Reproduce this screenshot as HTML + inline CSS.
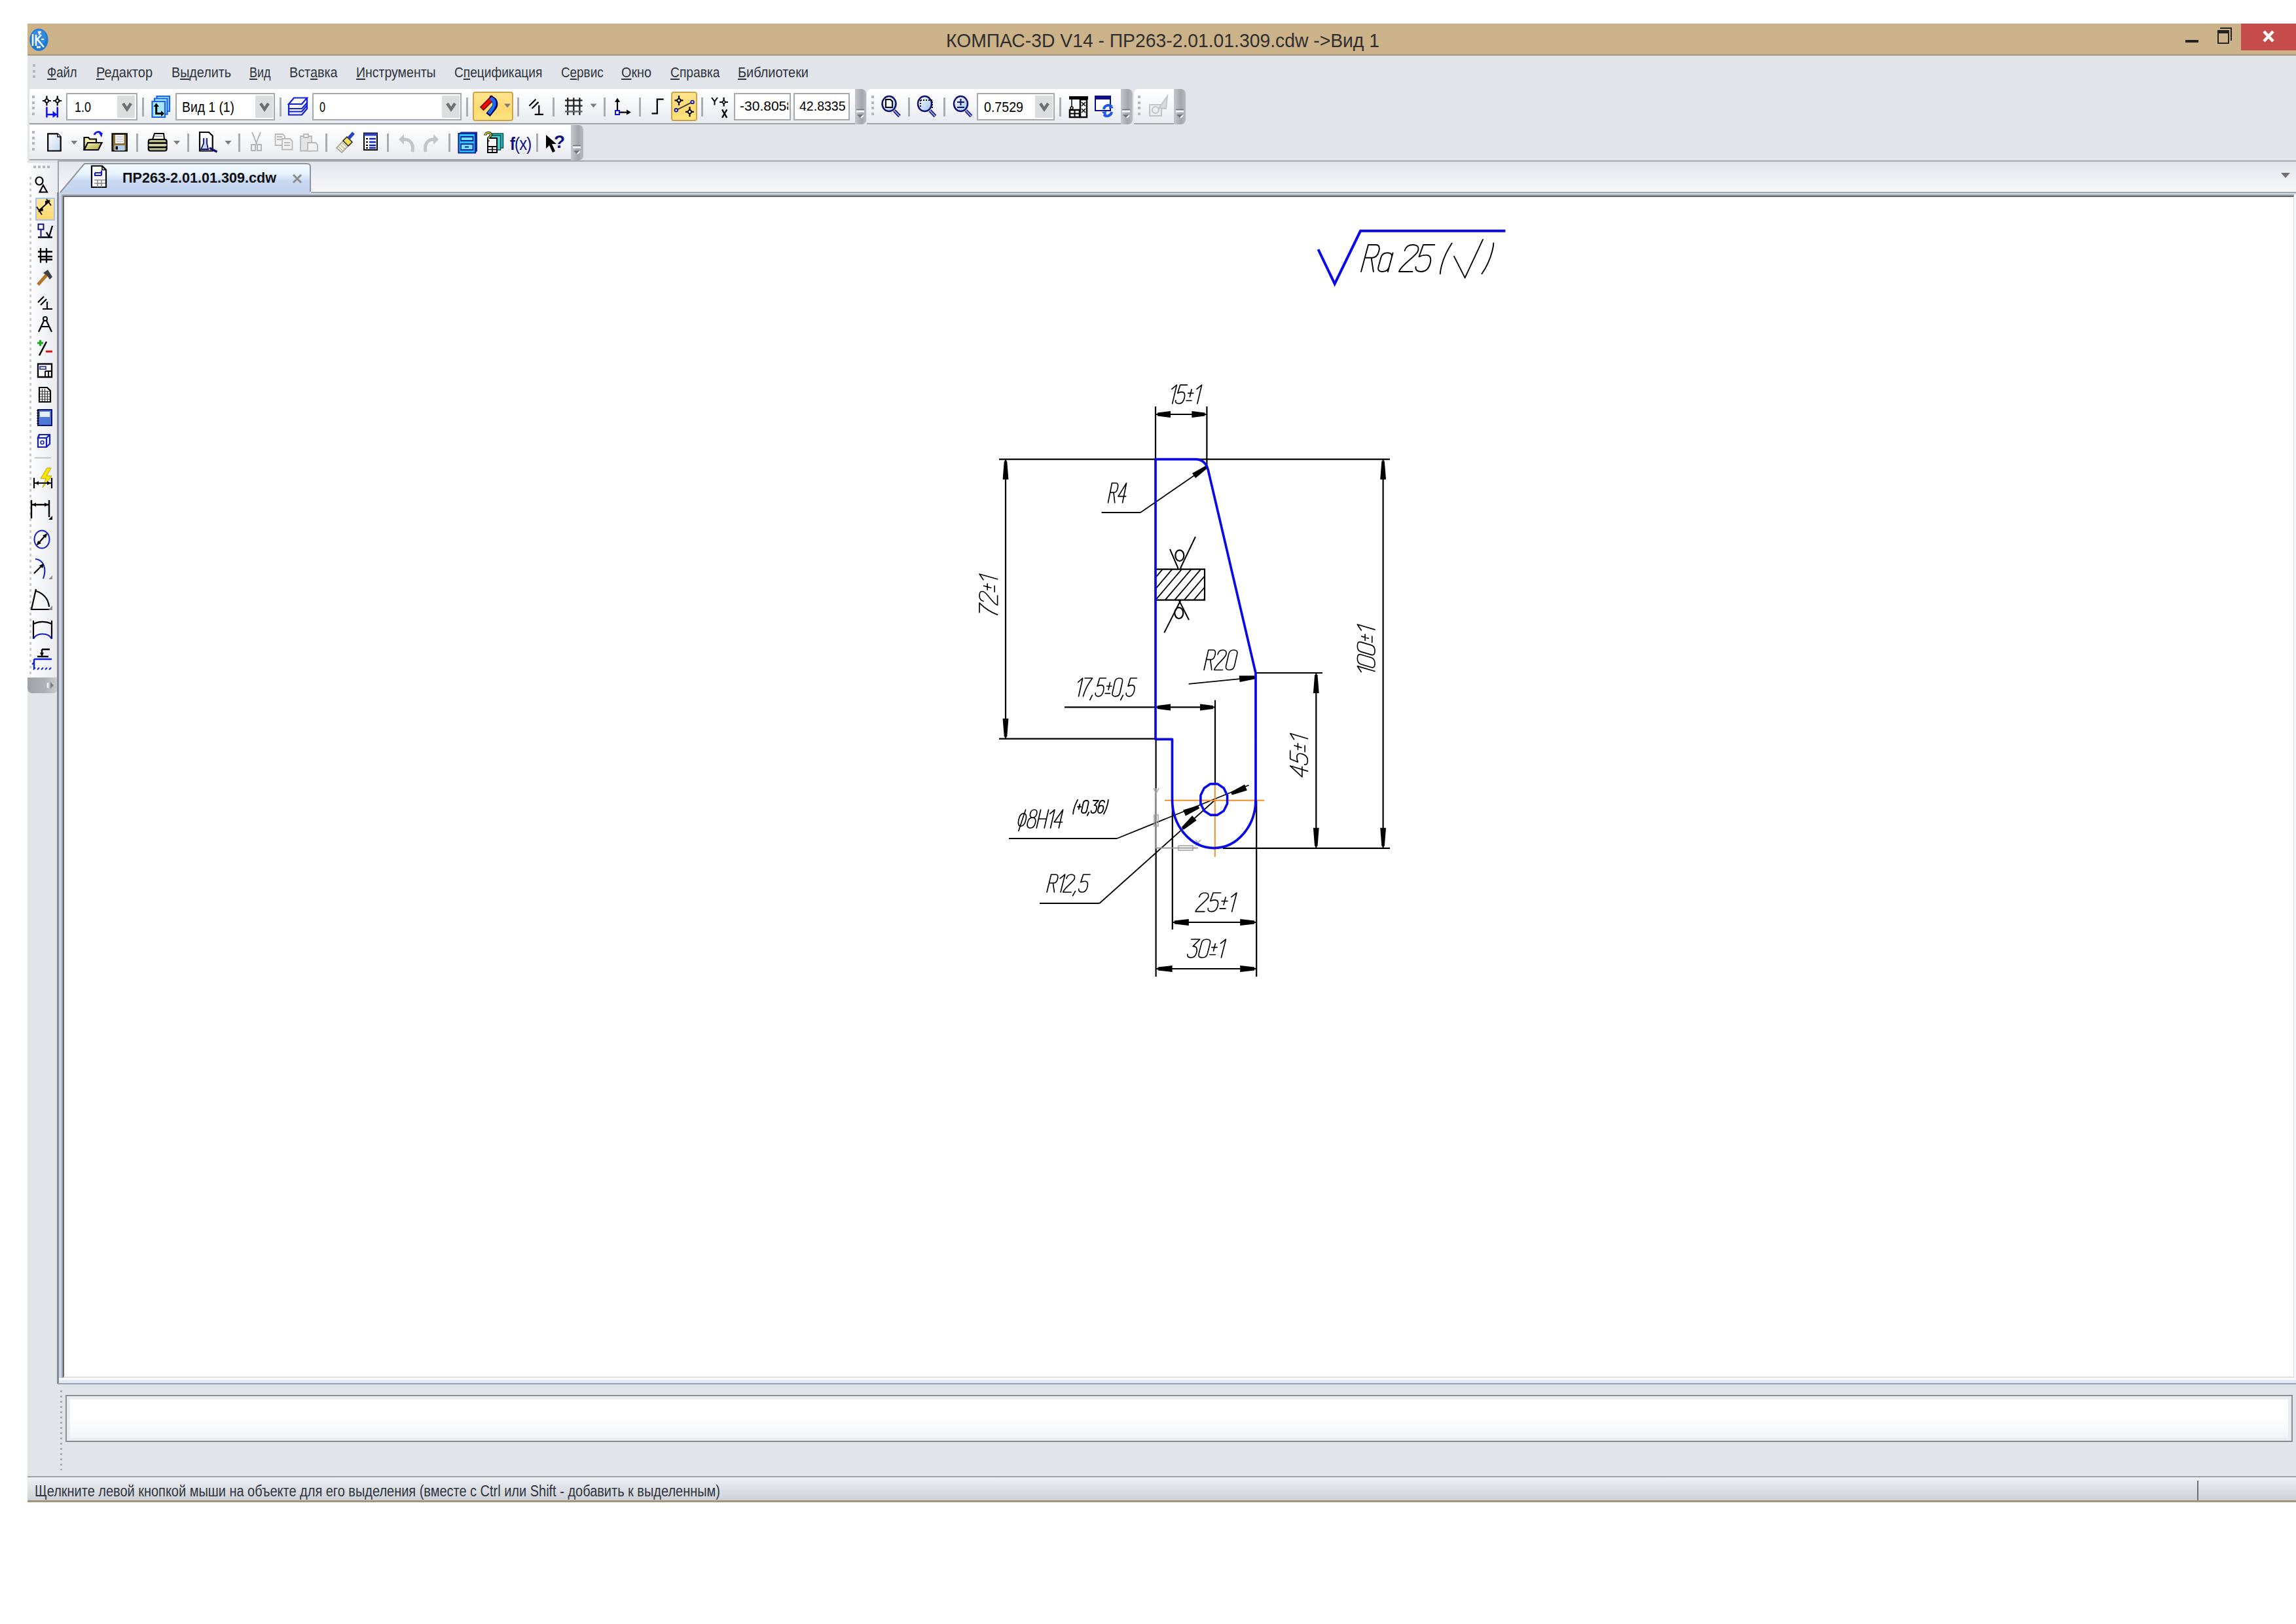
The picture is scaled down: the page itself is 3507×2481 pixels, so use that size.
<!DOCTYPE html>
<html><head><meta charset="utf-8">
<style>
html,body{margin:0;padding:0;}
body{width:3507px;height:2481px;background:#fff;position:relative;overflow:hidden;font-family:"Liberation Sans",sans-serif;}
.a{position:absolute;}
.t{position:absolute;white-space:pre;transform-origin:0 0;line-height:1;}
#title{left:42px;top:36px;width:3465px;height:49px;background:#CBB288;border-bottom:2px solid #A8967A;box-sizing:border-box;}
#menubar{left:42px;top:85px;width:3465px;height:161px;background:#E1E5EA;}
.tb{position:absolute;background:linear-gradient(#FFFFFF 0%,#F6F7F9 45%,#E7EAEE 100%);border-bottom:2px solid #A0A4A9;box-sizing:border-box;}
.cap{position:absolute;background:linear-gradient(90deg,#C4C8CD,#A2A6AC 60%,#B8BCC1);border-radius:0 7px 7px 0;box-sizing:border-box;}
.sep{position:absolute;width:3px;background:#A9ADB2;}
.gripv{position:absolute;width:4px;background:repeating-linear-gradient(#B4B8BD 0 4px,transparent 4px 8.6px);}
.griph{position:absolute;height:5px;background:repeating-linear-gradient(90deg,#B5B9BE 0 5px,transparent 5px 10px);}
.combo{position:absolute;background:#fff;border:2px solid #A6AAAF;box-sizing:border-box;}
.dd{position:absolute;background:#DCDDDF;}
.hl{position:absolute;background:linear-gradient(#FFE58E,#FFD970 60%,#FDE680);border:2px solid #CDA24A;border-radius:4px;box-sizing:border-box;}
#leftcol{left:42px;top:246px;width:47px;height:2010px;background:#E1E5EA;}
#lefttb{left:42px;top:249px;width:46px;height:787px;background:linear-gradient(90deg,#FFFFFF,#F2F3F6 60%,#E9EAF0);}
#tabbar{left:88px;top:245px;width:3419px;height:50px;background:linear-gradient(#E2E6EB,#F7F8FA);border-top:2px solid #A4A8AD;border-left:2px solid #A0A4A8;box-sizing:border-box;}
#frame{left:87px;top:294px;width:3420px;height:1820px;background:#C8D4EC;border-left:3px solid #858A94;box-sizing:border-box;}
#tabline{left:475px;top:293px;width:3032px;height:4px;background:linear-gradient(#A0A4AC 0 2px,#D8DCE6 2px 4px);}
#canvas{left:94px;top:297px;width:3410px;height:1808px;background:#A2A6AA;}
#canvas2{left:96px;top:299px;width:3408px;height:1806px;background:#fff;border-left:2px solid #64686C;border-top:2px solid #64686C;border-right:1px solid #D8DADC;border-bottom:2px solid #DEDDE2;box-sizing:border-box;}
#cmdpanel{left:88px;top:2113px;width:3419px;height:143px;background:#E1E5EA;border-top:2px solid #98A0AA;box-sizing:border-box;}
#fbot{left:90px;top:2105px;width:3417px;height:8px;background:linear-gradient(#FFFFFF 0 3.5px,#E3EAF7 3.5px);}
#fright{left:3504px;top:297px;width:3px;height:1810px;background:#F5F7FA;}
#cmdbox{left:100px;top:2131px;width:3402px;height:72px;background:#E9ECF0;border:2px solid #8A8E93;box-sizing:border-box;}
#cmdin{left:107px;top:2138px;width:3388px;height:59px;background:linear-gradient(#FFFFFF 0%,#FFFFFF 45%,#F1F3F5 100%);}
#status{left:42px;top:2255px;width:3465px;height:40px;background:linear-gradient(#EEF0F4,#E3E6EB 30%,#CDD0D5 100%);border-top:2px solid #9EA2A7;border-bottom:3px solid #A39678;box-sizing:border-box;}

</style></head><body>
<div id="title" class="a"></div>
<div id="menubar" class="a"></div>
<div class="gripv" style="left:50px;top:98px;height:22px;"></div>
<!-- toolbar 1 -->
<div class="tb" style="left:45px;top:136px;width:1264px;height:54px;"></div>
<div class="cap" style="left:1306px;top:136px;width:17px;height:54px;"></div>
<div class="gripv" style="left:49px;top:146.3px;height:30px;"></div>
<!-- toolbar 2 -->
<div class="tb" style="left:45px;top:191px;width:830px;height:54px;"></div>
<div class="cap" style="left:872px;top:191px;width:19px;height:54px;"></div>
<div class="gripv" style="left:49px;top:200.3px;height:30px;"></div>
<!-- toolbar 3 -->
<div class="tb" style="left:1324px;top:136px;width:392px;height:54px;border-radius:6px 0 0 0;"></div>
<div class="cap" style="left:1712px;top:136px;width:18px;height:54px;"></div>
<div class="gripv" style="left:1331px;top:146.3px;height:30px;"></div>
<!-- toolbar 4 -->
<div class="tb" style="left:1732px;top:136px;width:65px;height:54px;border-radius:6px 0 0 0;"></div>
<div class="cap" style="left:1793px;top:136px;width:18px;height:54px;"></div>
<div class="gripv" style="left:1738px;top:146.3px;height:30px;"></div>
<div id="leftcol" class="a"></div>
<div id="lefttb" class="a"></div>
<div class="a" style="left:45px;top:270px;width:3px;height:760px;background:repeating-linear-gradient(#C6C9CE 0 4px,transparent 4px 9px);"></div>
<div class="a" style="left:51px;top:253px;width:26px;height:4px;background:repeating-linear-gradient(90deg,#B5B9BE 0 4px,transparent 4px 7px);"></div>
<div class="cap" style="left:42px;top:1035px;width:46px;height:24px;border-radius:0 0 7px 7px;background:linear-gradient(90deg,#9FA3A9,#AEB2B7 60%,#C9CCD0);"></div>
<div id="tabbar" class="a"></div>
<div id="frame" class="a"></div>
<div id="canvas" class="a"></div>
<div id="canvas2" class="a"></div>
<div id="tabline" class="a"></div>
<div id="fbot" class="a"></div>
<div id="fright" class="a"></div>
<div id="cmdpanel" class="a"></div>
<div class="a" style="left:92px;top:2124px;width:3px;height:122px;background:repeating-linear-gradient(#A9ADB2 0 3px,transparent 3px 8px);"></div>
<div id="cmdbox" class="a"></div>
<div id="cmdin" class="a"></div>
<div id="status" class="a"></div>
<div class="a" style="left:3356px;top:2262px;width:2px;height:30px;background:#6C7075;"></div>

<!-- combos & fields -->
<div class="combo" style="left:101px;top:142px;width:109px;height:42px;"></div>
<div class="dd" style="left:179px;top:146px;width:27px;height:34px;"></div>
<div class="combo" style="left:268px;top:142px;width:152px;height:42px;"></div>
<div class="dd" style="left:390px;top:146px;width:27px;height:34px;"></div>
<div class="combo" style="left:477px;top:142px;width:228px;height:42px;"></div>
<div class="dd" style="left:675px;top:146px;width:27px;height:34px;"></div>
<div class="combo" style="left:1121px;top:142px;width:87px;height:42px;overflow:hidden;"></div>
<div class="combo" style="left:1212px;top:142px;width:86px;height:42px;"></div>
<div class="combo" style="left:1492px;top:142px;width:119px;height:42px;"></div>
<div class="dd" style="left:1581px;top:146px;width:27px;height:34px;"></div>
<!-- separators toolbar1 -->
<div class="sep" style="left:217px;top:149px;height:29px;"></div>
<div class="sep" style="left:427px;top:149px;height:29px;"></div>
<div class="sep" style="left:712px;top:149px;height:29px;"></div>
<div class="sep" style="left:790px;top:149px;height:29px;"></div>
<div class="sep" style="left:844px;top:149px;height:29px;"></div>
<div class="sep" style="left:922px;top:149px;height:29px;"></div>
<div class="sep" style="left:976px;top:149px;height:29px;"></div>
<div class="sep" style="left:1071px;top:149px;height:29px;"></div>
<div class="sep" style="left:1387px;top:149px;height:29px;"></div>
<div class="sep" style="left:1441px;top:149px;height:29px;"></div>
<div class="sep" style="left:1618px;top:149px;height:29px;"></div>
<!-- separators toolbar2 -->
<div class="sep" style="left:208px;top:204px;height:28px;"></div>
<div class="sep" style="left:286px;top:204px;height:28px;"></div>
<div class="sep" style="left:364px;top:204px;height:28px;"></div>
<div class="sep" style="left:497px;top:204px;height:28px;"></div>
<div class="sep" style="left:591px;top:204px;height:28px;"></div>
<div class="sep" style="left:685px;top:204px;height:28px;"></div>
<div class="sep" style="left:819px;top:204px;height:28px;"></div>
<!-- highlighted buttons -->
<div class="hl" style="left:722px;top:140px;width:62px;height:45px;"></div>
<div class="hl" style="left:1025px;top:140px;width:40px;height:45px;"></div>
<div class="a" style="left:54px;top:302px;width:30px;height:35px;background:linear-gradient(#FFE9A0,#FFD86A);border:2px solid #A9C3E8;box-sizing:border-box;"></div>
<!-- title bar window buttons -->
<div class="a" style="left:3423px;top:36px;width:84px;height:41px;background:#C74D4D;"></div>
<div class="a" style="left:3338px;top:61px;width:20px;height:4px;background:#222;"></div>
<div class="a" style="left:3391px;top:42px;width:18px;height:20px;border-top:2.5px solid #222;border-right:2.5px solid #222;box-sizing:border-box;"></div>
<div class="a" style="left:3387px;top:46px;width:18px;height:21px;border:2.5px solid #222;border-top-width:5.5px;box-sizing:border-box;background:#CBB288;"></div>
<svg class="a" style="left:3450px;top:44px" width="30" height="24"><path d="M8,4 L22,19 M22,4 L8,19" stroke="#fff" stroke-width="4.5"/></svg>
<svg class="a" style="left:3480px;top:260px" width="24" height="16"><path d="M4,4 H18 L11,12 Z" fill="#707070"/></svg>
<!-- tab -->
<svg class="a" style="left:0;top:0" width="600" height="310">
<path d="M92,294 L129,250 L469,250 Q474,250 474,255 L474,294 Z" fill="url(#tabg)" stroke="none"/>
<path d="M92,294 L129,250 L469,250 Q474,250 474,255 L474,293" fill="none" stroke="#8E949B" stroke-width="2"/>
<defs><linearGradient id="tabg" x1="0" y1="0" x2="0" y2="1"><stop offset="0" stop-color="#F4FAFF"/><stop offset="0.35" stop-color="#E8F3FD"/><stop offset="0.6" stop-color="#C9D9F2"/><stop offset="1" stop-color="#C3D3EF"/></linearGradient></defs>
<path d="M448,267 L460,279 M460,267 L448,279" stroke="#8C8C8C" stroke-width="3"/>
</svg>
<svg class="a" style="left:0;top:0" width="3507" height="1100">
<defs>
<linearGradient id="docg" x1="0" y1="0" x2="1" y2="1"><stop offset="0" stop-color="#FFFFFF"/><stop offset="1" stop-color="#BFD7F0"/></linearGradient>
<linearGradient id="foldg" x1="0" y1="0" x2="1" y2="1"><stop offset="0" stop-color="#FAF6B0"/><stop offset="1" stop-color="#A8A040"/></linearGradient>
<linearGradient id="magg" x1="0" y1="0" x2="1" y2="1"><stop offset="0" stop-color="#FFFFFF"/><stop offset="1" stop-color="#9CC0F0"/></linearGradient>
<g id="chev"><path d="M-6,-5 L0,4 L6,-5" fill="none" stroke="#6F6F6F" stroke-width="4.5" stroke-linejoin="miter"/></g>
<g id="tri"><path d="M-5,-3 H5 L0,3 Z" fill="#7C7C7C"/></g>
<g id="xh"><path d="M-6.5,0 H6.5 M0,-7.5 V7.5" stroke="#000" stroke-width="2.2"/><circle cx="0" cy="0" r="2.6" fill="#fff" stroke="#000" stroke-width="1.8"/></g>
<g id="capsym"><path d="M-6,0 H6" stroke="#F4F5F6" stroke-width="3"/><path d="M-6,-2.5 H6" stroke="#70747A" stroke-width="1.5"/><path d="M-5,5 H5 L0,10 Z" fill="#70747A"/><path d="M1,10 L5,6" stroke="#F4F5F6" stroke-width="2"/></g>
</defs>
<!-- combo chevrons -->
<use href="#chev" x="194" y="163"/>
<use href="#chev" x="404" y="163"/>
<use href="#chev" x="689" y="163"/>
<use href="#chev" x="1595" y="163"/>
<!-- cap symbols -->
<use href="#capsym" x="1314" y="170"/>
<use href="#capsym" x="881" y="225"/>
<use href="#capsym" x="1720" y="170"/>
<use href="#capsym" x="1802" y="170"/>
<!-- T1: snap icon -->
<use href="#xh" x="71.4" y="154"/>
<use href="#xh" x="87.7" y="154"/>
<path d="M71.4,163.5 V179.6 M87.7,163.5 V179.6 M71.4,175 H82" stroke="#1010E8" stroke-width="2.5" fill="none"/>
<path d="M80.5,169.5 L87.5,175 L80.5,180 Z" fill="#1010E8"/>
<!-- T1: views icon -->
<rect x="239.5" y="147" width="19.5" height="23" fill="#A6E6FA" stroke="#1A63E6" stroke-width="2.2"/>
<rect x="236" y="150.5" width="19.5" height="24" fill="#A6E6FA" stroke="#1A63E6" stroke-width="2.2"/>
<rect x="232.5" y="155" width="19.5" height="24" fill="#A6E6FA" stroke="#1A63E6" stroke-width="2.2"/>
<path d="M238.7,162 V173.4 H247" stroke="#000" stroke-width="3" fill="none"/>
<path d="M234.5,163 L238.7,157.5 L243,163 Z M246,169 L251,173.4 L246,178 Z" fill="#000"/>
<!-- T1: layers icon -->
<g fill="none" stroke="#1020D8" stroke-width="2.2">
<path d="M449,149.5 H469 L461,159 H441 Z"/>
<path d="M441,166 H461 L469,157"/>
<path d="M441,159 V175.5 H461 L469,166 V149.5"/>
<path d="M441,170.5 H461 L469,161"/>
</g>
<!-- T1: magnet -->
<path d="M738.5,163.5 L751,151" stroke="#700000" stroke-width="8" stroke-linecap="square"/>
<path d="M751,151 C757,153 758,160 754,165 L748,172.5" fill="none" stroke="#000060" stroke-width="8" stroke-linecap="square"/>
<path d="M738.5,163.5 L751,151" stroke="#F00808" stroke-width="5" stroke-linecap="square"/>
<path d="M751.5,151.5 C756,154 756.5,159.5 753,164.5 L748,171.5" fill="none" stroke="#1A6CF0" stroke-width="5" stroke-linecap="square"/>
<use href="#tri" x="775" y="161.5"/>
<!-- T1: parallel/perp -->
<path d="M808.4,161.7 L818.4,151.7 M812.6,165.8 L822.5,155.9 M823.3,160.8 V174.9 M816.7,174.9 H830" stroke="#000" stroke-width="2.2" fill="none"/>
<!-- T1: grid -->
<path d="M867.2,149.2 V175.7 M876.3,149.2 V175.7 M885.4,149.2 V175.7 M863,153.4 H889.6 M863,161.7 H889.6" stroke="#222" stroke-width="2.3"/>
<path d="M863,170.3 H889.6" stroke="#666" stroke-width="2.5"/>
<use href="#tri" x="906.5" y="161.5"/>
<!-- T1: axis -->
<path d="M943,152 V171.6 H961" stroke="#000" stroke-width="2.2" fill="none"/>
<path d="M939,156 L943,149.5 L947,156 Z M957,167.5 L964,171.6 L957,175.5 Z" fill="#000"/>
<rect x="940" y="169" width="6" height="6" fill="#fff" stroke="#1010E8" stroke-width="2"/>
<!-- T1: step -->
<path d="M995.5,173.3 H1003.8 V151.7 H1013.7" stroke="#000" stroke-width="2.3" fill="none"/>
<!-- T1: snap points -->
<path d="M1033,168.3 L1057.6,155.9" stroke="#333" stroke-width="1.8"/>
<use href="#xh" x="1037" y="153.4"/>
<use href="#xh" x="1053.5" y="170.8"/>
<circle cx="1032.8" cy="168.3" r="2.3" fill="#fff" stroke="#1515C0" stroke-width="1.8"/>
<circle cx="1057.6" cy="155.9" r="2.3" fill="#fff" stroke="#1515C0" stroke-width="1.8"/>
<!-- T1: Y X -->
<path d="M1087,149 L1091.5,155 L1096,149 M1091.5,155 V160.6" stroke="#000" stroke-width="2" fill="none"/>
<path d="M1099,156 H1112 M1105.6,149 V162.6" stroke="#000" stroke-width="2.2"/>
<circle cx="1105.6" cy="156" r="2" fill="#fff" stroke="#000" stroke-width="1.5"/>
<path d="M1103,167.4 L1110.3,179.9 M1110.3,167.4 L1103,179.9" stroke="#000" stroke-width="2.3"/>
<!-- T3: magnifiers -->
<g id="mag1">
<path d="M1366,169 L1374,177.5" stroke="#101070" stroke-width="5"/>
<path d="M1366,169 L1374,177.5" stroke="#8A9CD8" stroke-width="2"/>
<ellipse cx="1358" cy="158.6" rx="10.5" ry="11.5" fill="url(#magg)" stroke="#101070" stroke-width="2.5"/>
</g>
<path d="M1353,152 H1360 L1363,155 V164 H1353 Z" fill="#fff" stroke="#000" stroke-width="2"/>
<use href="#mag1" x="54.5" y="0"/>
<path d="M1406,153 H1424 V165 M1406,153 V165" stroke="#000" stroke-width="1.8" stroke-dasharray="2,2" fill="none"/>
<use href="#mag1" x="109.5" y="0"/>
<path d="M1462,156 H1473 M1467.5,151 V161 M1462,164 H1473" stroke="#101070" stroke-width="2"/>
<!-- T3: crane -->
<path d="M1633,147 H1662 V152 H1633 Z" fill="#000"/>
<path d="M1650,152 H1660 V179 H1650 Z" fill="#fff" stroke="#000" stroke-width="2.5"/>
<path d="M1652,156 L1658,162 M1658,156 L1652,162 M1652,166 L1658,172 M1658,166 L1652,172" stroke="#000" stroke-width="1.5"/>
<path d="M1637,152 V163" stroke="#000" stroke-width="1.5"/>
<circle cx="1637" cy="165" r="2" fill="none" stroke="#000" stroke-width="1.5"/>
<rect x="1634" y="168" width="15" height="11" fill="#fff" stroke="#000" stroke-width="2.5"/>
<path d="M1634,173.5 H1649 M1641.5,168 V179" stroke="#000" stroke-width="2"/>
<!-- T3: refresh window -->
<rect x="1673" y="147" width="23" height="22" fill="#fff" stroke="#101080" stroke-width="2"/>
<rect x="1673" y="147" width="23" height="5" fill="#101080"/>
<path d="M1686,167 A7,7 0 0 1 1698,163" fill="none" stroke="#1E5AE8" stroke-width="4"/>
<path d="M1698,171 A7,7 0 0 1 1686,175" fill="none" stroke="#1E5AE8" stroke-width="4"/>
<path d="M1695,158 L1701,165 L1694,166 Z M1689,178 L1683,171 L1690,170 Z" fill="#1E5AE8"/>
<!-- T4: disabled -->
<g opacity="0.45" stroke="#8A8A8A" fill="none" stroke-width="2">
<rect x="1756" y="160" width="18" height="17" fill="#E6E6E6"/>
<ellipse cx="1765" cy="168" rx="5" ry="5"/>
<path d="M1770,165 L1783,147 L1781,166 Z" fill="#BBBBBB"/>
</g>
<!-- T2: new doc -->
<path d="M73.2,204.3 H88 L92.7,209 V230.5 H73.2 Z" fill="url(#docg)" stroke="#000" stroke-width="2.2"/>
<path d="M88,204.3 V209 H92.7" fill="#fff" stroke="#000" stroke-width="1.5"/>
<use href="#tri" x="113.3" y="218"/>
<!-- T2: open -->
<path d="M128.5,229 V210 H135 L137,212.5 H147 V218" fill="#F7F0A8" stroke="#000" stroke-width="2.2"/>
<path d="M128.5,229 L134,218 H155.5 L150,229 Z" fill="url(#foldg)" stroke="#000" stroke-width="2.2"/>
<path d="M144,206 C146,201 152,200 154,204" fill="none" stroke="#1818E8" stroke-width="3"/>
<path d="M151,203 L157,203 L155,210 Z" fill="#1818E8"/>
<!-- T2: save -->
<rect x="171.5" y="204.3" width="22.3" height="26.2" fill="#8A7240" stroke="#000" stroke-width="2.2"/>
<rect x="176" y="206" width="13.5" height="13" fill="#F4F2EE"/>
<path d="M177.5,209 H188 M177.5,212.5 H188 M177.5,216 H188" stroke="#B8B4C8" stroke-width="1.2"/>
<rect x="175" y="222" width="15.5" height="8" fill="#B0CFEA"/>
<rect x="176.5" y="223.5" width="3.5" height="5" fill="#000"/>
<!-- T2: printer -->
<path d="M233,213 L236,204 H250 L251,213" fill="#F4F4F0" stroke="#000" stroke-width="2"/>
<path d="M236.5,208 H248" stroke="#999" stroke-width="1.5"/>
<rect x="226.8" y="213" width="27.8" height="17.5" rx="3" fill="#BEBE90" stroke="#000" stroke-width="2.2"/>
<path d="M227,218.5 H254.5 M227,225 H254.5" stroke="#000" stroke-width="2.5"/>
<path d="M227,221.5 H254.5" stroke="#E0E0C0" stroke-width="2"/>
<use href="#tri" x="270" y="218"/>
<!-- T2: preview -->
<path d="M305,202 H319 L324.7,207.5 V230.5 H305 Z" fill="#fff" stroke="#000" stroke-width="2.2"/>
<path d="M311,211 V219 L307,228 H318 L316,219 V211" fill="#C8D8F2" stroke="#101070" stroke-width="1.8"/>
<path d="M320,226 L331.5,232" stroke="#101070" stroke-width="3.5"/>
<use href="#tri" x="348.5" y="218"/>
<!-- T2: scissors (disabled) -->
<g stroke="#B4B4B4" stroke-width="2" fill="none">
<path d="M385,202 L393,222 M398,202 L390,222"/>
<rect x="384" y="221" width="6" height="9"/><rect x="393" y="221" width="6" height="9"/>
</g>
<!-- T2: copy/paste disabled -->
<g stroke="#B8B8B8" stroke-width="1.8" fill="#F2F2F2">
<path d="M420.5,205 H432 L435,208 V222 H420.5 Z"/>
<path d="M431,212 H443 L446.5,215.5 V228.5 H431 Z"/>
<path d="M423,209 H431 M423,213 H431 M434,218 H443 M434,222 H443" fill="none"/>
<path d="M459,208 H476 V230.5 H459 Z" fill="#E4E4E4"/>
<path d="M464,205 H471 V210 H464 Z"/>
<path d="M470,218 H482 L485,221 V230.6 H470 Z"/>
</g>
<!-- T2: brush -->
<path d="M514,226 L526,213 L534,221 L522,233 Z" fill="#F4F0D0" stroke="#9A9A9A" stroke-width="1.5"/>
<path d="M516,223 L524,231 M519,220 L527,228 M522,217 L530,225" stroke="#A0A0A0" stroke-width="1"/>
<path d="M524,215 L530,209 L538,217 L532,223 Z" fill="#F0E050" stroke="#202020" stroke-width="1.5"/>
<path d="M532,212 L540,203" stroke="#2840C0" stroke-width="5"/>
<!-- T2: list -->
<rect x="556" y="203.5" width="20" height="25.5" fill="#fff" stroke="#000" stroke-width="2"/>
<rect x="556" y="203.5" width="20" height="4" fill="#3040C0"/>
<path d="M559,212 H562 M559,217 H562 M559,222 H562 M559,226 H562" stroke="#000" stroke-width="2"/>
<path d="M564,212 H574 M564,217 H574 M564,222 H574 M564,226 H574" stroke="#1020D0" stroke-width="2.5"/>
<!-- T2: undo/redo disabled -->
<path d="M630,232 C632,222 628,213 618,213 L612,213" fill="none" stroke="#C4C4C4" stroke-width="5"/>
<path d="M609,213 L617,205 L617,221 Z" fill="#C4C4C4"/>
<path d="M650,232 C648,222 652,213 662,213 L666,213" fill="none" stroke="#C4C4C4" stroke-width="5"/>
<path d="M670,213 L662,205 L662,221 Z" fill="#C4C4C4"/>
<!-- T2: cabinet -->
<path d="M701,204 L704,201.5 H729 V231 L726,233.5 Z" fill="#1030A0"/>
<rect x="700.5" y="204" width="25.5" height="29.5" fill="#20C8F0" stroke="#1020A0" stroke-width="2.2"/>
<rect x="704" y="209" width="18.5" height="6" fill="#70E4F8" stroke="#1020A0" stroke-width="1.8"/>
<rect x="704" y="220" width="18.5" height="9" fill="#70E4F8" stroke="#1020A0" stroke-width="1.8"/>
<path d="M710,224.5 H716" stroke="#1020A0" stroke-width="2"/>
<!-- T2: help window -->
<rect x="752" y="204" width="16.5" height="22" fill="#28B8B8" stroke="#105050" stroke-width="1.5"/>
<rect x="748" y="207" width="16.5" height="22" fill="#50D0D0" stroke="#105050" stroke-width="1.5"/>
<rect x="745" y="211" width="14" height="13" fill="#fff" stroke="#000" stroke-width="2"/>
<rect x="745" y="224" width="14" height="9" fill="#fff" stroke="#000" stroke-width="2"/>
<path d="M745,228.5 H759 M752,224 V233" stroke="#000" stroke-width="1.5"/>
<path d="M741,207 C741,202 750,201 750,206 C750,209 746,209 746,212 M746,214.5 V216" fill="none" stroke="#000" stroke-width="3.5"/>
<path d="M741,207 C741,202 750,201 750,206 C750,209 746,209 746,212" fill="none" stroke="#F0F020" stroke-width="1.5"/>
<!-- T2: f(x) -->
<text x="779" y="229" font-family="Liberation Sans" font-weight="bold" font-size="28" fill="#10107A" transform="translate(779,0) scale(0.85,1) translate(-779,0)" letter-spacing="-1">f<tspan font-weight="normal">(x)</tspan></text>
<!-- T2: arrow ? -->
<path d="M834,206 L834,227 L839,222 L844,233 L848,231 L843,220 L850,220 Z" fill="#000"/>
<text x="846" y="226" font-family="Liberation Sans" font-weight="bold" font-size="28" fill="#10107A">?</text>
<!-- left toolbar icons -->
<g stroke="#000" stroke-width="2.2" fill="none">
<ellipse cx="60" cy="276.5" rx="5.5" ry="6"/>
<path d="M66,283 L72,293.5 H60.5 Z"/>
</g>
<g stroke="#000" stroke-width="1.8" fill="none">
<path d="M59,322 L76,307 M56,316 L64,328 M71,304 L78,314"/>
</g>
<path d="M58,324 L65,316 L66,322 Z M77,305 L69,313 L69,307 Z" fill="#000"/>
<rect x="58.5" y="342.5" width="8" height="8" fill="#fff" stroke="#10107A" stroke-width="2"/>
<path d="M62.5,350.5 V361 M58,362.5 H80 M71,355 L75,361.5 L80,345" stroke="#10107A" stroke-width="2" fill="none"/>
<path d="M58,362.5 H80 M71,355 L75,361.5 L80,345" stroke="#000" stroke-width="2" fill="none"/>
<path d="M62,379 V401.5 M71,379 V401.5 M58,384.5 H80 M58,392 H80 M62.5,396.5 H80" stroke="#000" stroke-width="2.3"/>
<path d="M58,435 L73,418" stroke="#B07828" stroke-width="5"/>
<path d="M66,417 L73,412 L80,423 L76,427 L72,421 Z" fill="#404040"/>
<path d="M58,462 L67,453 M62,466 L71,457 M72,461 V472 M65,472 H80" stroke="#000" stroke-width="2.2" fill="none"/>
<path d="M59,507 L67.5,489 M70.5,489 L79,507 M62,499 H76" stroke="#000" stroke-width="2.2" fill="none"/><circle cx="69" cy="487" r="3" fill="#fff" stroke="#000" stroke-width="2"/>
<path d="M57,524 H66 M61.5,519.5 V528.5" stroke="#10B010" stroke-width="3"/>
<path d="M60,543 L71,522" stroke="#000" stroke-width="2.5"/>
<path d="M70,537 H80" stroke="#E01010" stroke-width="3"/>
<rect x="58" y="556" width="21" height="20" fill="#fff" stroke="#000" stroke-width="2.3"/>
<rect x="61" y="560" width="9" height="4" fill="#fff" stroke="#1020B0" stroke-width="1.5"/>
<path d="M69,567 H79 M69,567 V576 M74,567 V576" stroke="#000" stroke-width="1.8"/>
<path d="M60,592 H72 L77,597 V614 H60 Z" fill="#fff" stroke="#000" stroke-width="2.2"/>
<path d="M61,598 H76 M61,602 H76 M61,606 H76 M61,610 H76 M64.5,594 V613 M68.5,594 V613 M72.5,597 V613" stroke="#333" stroke-width="1.2"/>
<rect x="58" y="626" width="21" height="24" fill="#5078D8" stroke="#101070" stroke-width="2"/>
<rect x="61" y="629" width="15" height="8" fill="#E8F0FF"/>
<path d="M58,626 V650" stroke="#000" stroke-width="3" stroke-dasharray="2,2"/>
<path d="M60,664 H76 V678 L71,683 H58 V669 Z" fill="none" stroke="#1020C0" stroke-width="2.2"/>
<path d="M60,664 L58,669 H71 V683 M71,669 L76,664" stroke="#1020C0" stroke-width="2.2" fill="none"/>
<circle cx="64.5" cy="676" r="2.5" fill="none" stroke="#1020C0" stroke-width="1.5"/>
<path d="M53,699.5 H78" stroke="#B0B4B8" stroke-width="1.5"/>
<!-- dims -->
<path d="M72,715 L62,731 H70 L65,745 L79,727 H71 L78,715 Z" fill="#F8E800" stroke="#C0A000" stroke-width="1"/>
<path d="M52,730 V746 M79,730 V746 M53,738 H78" stroke="#000" stroke-width="2.2"/>
<path d="M53,738 L59,735 V741 Z M78,738 L72,735 V741 Z" fill="#000"/>
<path d="M48,764 V792 M75,764 V790 M49,771 H74" stroke="#000" stroke-width="2.4"/>
<path d="M49,771 L55,768 V774 Z M74,771 L68,768 V774 Z M80,788 L74,794 H80 Z" fill="#000"/>
<ellipse cx="64" cy="824" rx="11.5" ry="13.5" fill="none" stroke="#1020C0" stroke-width="2"/>
<path d="M57,832 L71,816" stroke="#000" stroke-width="2.3"/>
<path d="M56,833 L58,826 L63,830 Z M72,815 L70,822 L65,818 Z" fill="#000"/>
<path d="M54,854 C66,855 72,868 66,884" fill="none" stroke="#1020C0" stroke-width="2"/>
<path d="M52,876 L66,862" stroke="#000" stroke-width="2"/>
<path d="M67,861 L65,868 L60,864 Z M80,879 L74,885 H80 Z" fill="#8A8A8A"/>
<path d="M67,861 L65,868 L60,864 Z" fill="#000"/>
<path d="M55,900 L48,931 H79 M55,903 C66,906 74,915 75,927" fill="none" stroke="#000" stroke-width="2.2"/>
<path d="M80,925 L74,932 H80 Z" fill="#8A8A8A"/>
<path d="M51,948 V976 M79,948 V976 M51,953 C60,949 70,949 79,953" fill="none" stroke="#000" stroke-width="2.2"/>
<path d="M51,976 C56,966 74,966 79,976" fill="none" stroke="#1020C0" stroke-width="2"/>
<path d="M64,992 V1003 M57,1003 H74 M64,992 H76" stroke="#000" stroke-width="2.4" fill="none"/>
<path d="M61,997 H67 L64,1003 Z" fill="#000"/>
<path d="M52,1007 H79 M52,1007 V1021" stroke="#1020E0" stroke-width="2.5"/>
<path d="M52,1012 L49,1015 M54,1020 L51,1023 M60,1020 L57,1023 M66,1020 L63,1023 M72,1020 L69,1023 M78,1020 L75,1023" stroke="#1020E0" stroke-width="2"/>
<!-- left cap symbol -->
<path d="M73,1043 V1051" stroke="#F2F3F4" stroke-width="2.5"/>
<path d="M77,1042 L82,1047 L77,1052 Z" fill="#7A7E83"/>
<!-- tab icon -->
<path d="M140,253.5 H156 L162,259.5 V286 H140 Z" fill="#fff" stroke="#000" stroke-width="2.2"/>
<path d="M156,253.5 V259.5 H162" fill="none" stroke="#000" stroke-width="1.5"/>
<path d="M145,264 H155 M155,260.5 V268 M145,264 V268 H155" stroke="#1818D0" stroke-width="2.2" fill="none"/>
<path d="M144,275 H161 M144,280 H161 M149,275 V286 M155,275 V286" stroke="#8A8A8A" stroke-width="1.5"/>
<!-- title logo -->
<ellipse cx="59.4" cy="60.7" rx="14.2" ry="17" fill="#1F78D0"/>
<ellipse cx="59.4" cy="57" rx="11" ry="12" fill="#3A9AF0" opacity="0.6"/>
<path d="M50,52 V70 M55,53 V70 M55,62 L63,53 M57,60 L67,72 M58,49 H63 M60,49 V53" stroke="#fff" stroke-width="2.5" fill="none"/>
<path d="M63,60 L67,60" stroke="#fff" stroke-width="2"/>
<path d="M56,72 H62" stroke="#fff" stroke-width="3"/>
</svg>

<svg class="a" style="left:0;top:0" width="3507" height="2481">
<style>path,line,polyline,ellipse,rect{vector-effect:non-scaling-stroke}</style>
<polyline points="2013.5,381 2038.7,433.6 2078,352.8 2299.4,352.8" fill="none" stroke="#0A0AE6" stroke-width="4"/>
<line x1="1526" y1="701.6" x2="2123" y2="701.6" stroke="#000" stroke-width="2.2"/>
<line x1="1765" y1="621" x2="1765" y2="701.6" stroke="#000" stroke-width="2.2"/>
<line x1="1843.4" y1="621" x2="1843.4" y2="712" stroke="#000" stroke-width="2.2"/>
<line x1="1765" y1="633" x2="1843.4" y2="633" stroke="#000" stroke-width="2.2"/>
<path d="M1768.0,630.5 L1788.0,628.0 L1788.0,638.0 L1768.0,635.5 Z" fill="#000"/>
<path d="M1840.4,635.5 L1820.4,638.0 L1820.4,628.0 L1840.4,630.5 Z" fill="#000"/>
<line x1="1536" y1="701.6" x2="1536" y2="1128.8" stroke="#000" stroke-width="2.2"/>
<path d="M1538.2,704.6 L1540.4,732.6 L1531.6,732.6 L1533.8,704.6 Z" fill="#000"/>
<path d="M1533.8,1125.8 L1531.6,1097.8 L1540.4,1097.8 L1538.2,1125.8 Z" fill="#000"/>
<line x1="1526" y1="1128.6" x2="1765" y2="1128.6" stroke="#000" stroke-width="2.2"/>
<line x1="2112.6" y1="701.6" x2="2112.6" y2="1295.8" stroke="#000" stroke-width="2.2"/>
<path d="M2114.8,704.6 L2117.0,732.6 L2108.2,732.6 L2110.4,704.6 Z" fill="#000"/>
<path d="M2110.4,1292.8 L2108.2,1264.8 L2117.0,1264.8 L2114.8,1292.8 Z" fill="#000"/>
<line x1="1868" y1="1295.8" x2="2123" y2="1295.8" stroke="#000" stroke-width="2.2"/>
<line x1="1919" y1="1028" x2="2020" y2="1028" stroke="#000" stroke-width="2.2"/>
<line x1="2010.3" y1="1028" x2="2010.3" y2="1295.8" stroke="#000" stroke-width="2.2"/>
<path d="M2012.5,1031.0 L2014.7,1059.0 L2005.9,1059.0 L2008.1,1031.0 Z" fill="#000"/>
<path d="M2008.1,1292.8 L2005.9,1264.8 L2014.7,1264.8 L2012.5,1292.8 Z" fill="#000"/>
<line x1="1626" y1="1080.4" x2="1856" y2="1080.4" stroke="#000" stroke-width="2.2"/>
<line x1="1856" y1="1069.6" x2="1856" y2="1196" stroke="#000" stroke-width="2.2"/>
<path d="M1768.0,1077.9 L1788.0,1075.5 L1788.0,1085.4 L1768.0,1082.9 Z" fill="#000"/>
<path d="M1853.0,1082.9 L1833.0,1085.4 L1833.0,1075.5 L1853.0,1077.9 Z" fill="#000"/>
<line x1="1682.6" y1="783" x2="1742" y2="783" stroke="#000" stroke-width="2.2"/>
<line x1="1742" y1="783" x2="1845" y2="712" stroke="#000" stroke-width="1.8"/>
<path d="M1844.6,714.9 L1826.1,730.4 L1821.1,723.1 L1842.1,711.3 Z" fill="#000"/>
<line x1="1815.6" y1="1044.8" x2="1919" y2="1034.6" stroke="#000" stroke-width="1.8"/>
<path d="M1917.3,1037.3 L1893.6,1042.1 L1892.6,1032.2 L1916.8,1032.3 Z" fill="#000"/>
<line x1="1541" y1="1281" x2="1706" y2="1281" stroke="#000" stroke-width="2.2"/>
<line x1="1706" y1="1281" x2="1907.5" y2="1199.5" stroke="#000" stroke-width="1.8"/>
<path d="M1832.1,1235.1 L1810.9,1246.6 L1807.1,1237.5 L1830.2,1230.5 Z" fill="#000"/>
<path d="M1879.9,1209.9 L1901.1,1198.4 L1904.9,1207.5 L1881.8,1214.5 Z" fill="#000"/>
<line x1="1588" y1="1380" x2="1679.4" y2="1380" stroke="#000" stroke-width="2.2"/>
<line x1="1679.4" y1="1380" x2="1856" y2="1222" stroke="#000" stroke-width="1.8"/>
<path d="M1804.8,1263.8 L1821.1,1246.0 L1827.7,1253.3 L1808.1,1267.5 Z" fill="#000"/>
<line x1="1765.6" y1="1127" x2="1765.6" y2="1492" stroke="#000" stroke-width="2.2"/>
<line x1="1790.8" y1="1222" x2="1790.8" y2="1420" stroke="#000" stroke-width="2.2"/>
<line x1="1919.2" y1="1222" x2="1919.2" y2="1492" stroke="#000" stroke-width="2.2"/>
<line x1="1790.8" y1="1409" x2="1919.2" y2="1409" stroke="#000" stroke-width="2.2"/>
<path d="M1793.8,1406.5 L1815.8,1404.0 L1815.8,1414.0 L1793.8,1411.5 Z" fill="#000"/>
<path d="M1916.2,1411.5 L1894.2,1414.0 L1894.2,1404.0 L1916.2,1406.5 Z" fill="#000"/>
<line x1="1765.6" y1="1480" x2="1919.2" y2="1480" stroke="#000" stroke-width="2.2"/>
<path d="M1768.6,1477.5 L1790.6,1475.0 L1790.6,1485.0 L1768.6,1482.5 Z" fill="#000"/>
<path d="M1916.2,1482.5 L1894.2,1485.0 L1894.2,1475.0 L1916.2,1477.5 Z" fill="#000"/>
<rect x="1765" y="869.7" width="75" height="47" fill="none" stroke="#000" stroke-width="2.2"/>
<clipPath id="hc"><rect x="1765" y="869.7" width="75" height="47"/></clipPath>
<path clip-path="url(#hc)" d="M1706.6,916.7 L1746.6,869.7 M1721.2,916.7 L1761.2,869.7 M1735.8,916.7 L1775.8,869.7 M1750.4,916.7 L1790.4,869.7 M1765.0,916.7 L1805.0,869.7 M1779.6,916.7 L1819.6,869.7 M1794.2,916.7 L1834.2,869.7 M1808.8,916.7 L1848.8,869.7 M1823.4,916.7 L1863.4,869.7 M1838.0,916.7 L1878.0,869.7 M1852.6,916.7 L1892.6,869.7 M1867.2,916.7 L1907.2,869.7" stroke="#000" stroke-width="1.8"/>
<ellipse cx="1801.8" cy="848.7" rx="6.5" ry="8.4" fill="none" stroke="#000" stroke-width="2.2"/>
<path d="M1787,839 L1799,867 V869.7 M1803.5,869.7 V867 L1826,820" fill="none" stroke="#000" stroke-width="2"/>
<ellipse cx="1800.8" cy="936.6" rx="6.5" ry="8.4" fill="none" stroke="#000" stroke-width="2.2"/>
<path d="M1803.4,917 L1778.3,966.5 M1800.8,917 L1816,947" fill="none" stroke="#000" stroke-width="2"/>
<path d="M1766,1204 V1295.5 H1830" fill="none" stroke="#9A9A9A" stroke-width="2"/>
<path d="M1763,1245 H1769 V1262 H1763 Z M1800,1292 H1822 V1299 H1800 Z" fill="none" stroke="#A0A0A0" stroke-width="1.5"/>
<path d="M1762,1204 L1766,1212 L1770,1204 M1766,1212 V1220" fill="none" stroke="#A8A8A8" stroke-width="1.5"/>
<path d="M1826,1283 L1834,1292 M1834,1283 L1826,1292" fill="none" stroke="#A8A8A8" stroke-width="1.5"/>
<line x1="1779" y1="1222.8" x2="1931" y2="1222.8" stroke="#F0902A" stroke-width="2"/>
<line x1="1855.8" y1="1196" x2="1855.8" y2="1309" stroke="#F0902A" stroke-width="2"/>
<path d="M1765.0,701.6 H1825.9 Q1841.5,701.6 1845.6,719.1 L1918.0,1028.3 V1221.3 A63.7,74.2 0 0 1 1790.5,1221.3 V1129.3 H1765.0 Z" fill="none" stroke="#0A0AE6" stroke-width="3.7" stroke-linejoin="round"/>
<polygon points="1874.6,1227.7 1869.2,1238.7 1859.7,1245.1 1848.8,1245.1 1839.3,1238.7 1833.9,1227.7 1833.9,1215.0 1839.3,1204.0 1848.8,1197.6 1859.7,1197.6 1869.2,1204.0 1874.6,1215.0" fill="none" stroke="#0A0AE6" stroke-width="3.6" stroke-linejoin="round"/>
<g transform="translate(2079.00,415.00)"><g transform="matrix(4.1000,0,1.0986,-4.1000,0,0)" fill="none" stroke="#000" stroke-width="1.9" stroke-linecap="round" stroke-linejoin="round" style="vector-effect:non-scaling-stroke"><path transform="translate(0.00,0)" d="M0,0 V10 H2.8 C4,10 4.6,9.1 4.6,7.6 C4.6,6.1 4,5.2 2.8,5.2 H0 M2.4,5.2 L4.6,0"/></g></g>
<g transform="translate(2103.50,415.00)"><g transform="matrix(4.1000,0,1.0986,-4.1000,0,0)" fill="none" stroke="#000" stroke-width="1.9" stroke-linecap="round" stroke-linejoin="round" style="vector-effect:non-scaling-stroke"><path transform="translate(0.00,0)" d="M4,7 V0 M4,5.2 C4,6.4 3.3,7 2,7 C0.7,7 0,6.4 0,5.2 V1.8 C0,0.6 0.7,0 2,0 C3.3,0 4,0.6 4,1.8"/></g></g>
<g transform="translate(2137.00,415.00)"><g transform="matrix(4.1000,0,1.0986,-4.1000,0,0)" fill="none" stroke="#000" stroke-width="1.9" stroke-linecap="round" stroke-linejoin="round" style="vector-effect:non-scaling-stroke"><path transform="translate(0.00,0)" d="M0,7.8 C0,9.3 1,10 2.5,10 C4,10 5,9.3 5,7.8 C5,5.8 0,2.5 0,0 H5"/></g></g>
<g transform="translate(2160.60,415.00)"><g transform="matrix(4.1000,0,1.0986,-4.1000,0,0)" fill="none" stroke="#000" stroke-width="1.9" stroke-linecap="round" stroke-linejoin="round" style="vector-effect:non-scaling-stroke"><path transform="translate(0.00,0)" d="M4.8,10 H0.6 L0.2,5.6 C0.9,6 1.7,6.2 2.6,6.2 C4.2,6.2 5,5 5,3.1 C5,1 4,0 2.5,0 C1,0 0,0.7 0,1.8"/></g></g>
<g transform="translate(2199.50,415.00)"><g transform="matrix(4.1000,0,1.0986,-4.1000,0,0)" fill="none" stroke="#000" stroke-width="1.9" stroke-linecap="round" stroke-linejoin="round" style="vector-effect:non-scaling-stroke"><path transform="translate(0.00,0)" d="M1.6,10.6 C0.6,8 0,5 0,2.5 C0,1.2 0.1,0 0.3,-0.8"/></g></g>
<g transform="translate(2221.00,415.00)"><g transform="matrix(4.1000,0,1.0986,-4.1000,0,0)" fill="none" stroke="#000" stroke-width="1.9" stroke-linecap="round" stroke-linejoin="round" style="vector-effect:non-scaling-stroke"><path transform="translate(0.00,0)" d="M-1.53,5.7 L4.67,-2.3 L7.52,11.98"/></g></g>
<g transform="translate(2264.30,415.00)"><g transform="matrix(4.1000,0,1.0986,-4.1000,0,0)" fill="none" stroke="#000" stroke-width="1.9" stroke-linecap="round" stroke-linejoin="round" style="vector-effect:non-scaling-stroke"><path transform="translate(0.00,0)" d="M1.3,10.6 C1.5,9.8 1.6,8.5 1.6,7.3 C1.6,4.5 1,1.5 0,-0.8"/></g></g>
<g transform="translate(1784.60,616.60)"><g transform="matrix(2.5273,0,0.6772,-2.8500,0,0)" fill="none" stroke="#000" stroke-width="1.65" stroke-linecap="round" stroke-linejoin="round" style="vector-effect:non-scaling-stroke"><path transform="translate(0.00,0)" d="M0,7.8 L2.4,10 V0"/><path transform="translate(3.90,0)" d="M4.8,10 H0.6 L0.2,5.6 C0.9,6 1.7,6.2 2.6,6.2 C4.2,6.2 5,5 5,3.1 C5,1 4,0 2.5,0 C1,0 0,0.7 0,1.8"/><path transform="translate(10.40,0)" d="M0,5.6 H3.2 M1.6,7.6 V3.6 M0,1.6 H3.2"/><path transform="translate(15.10,0)" d="M0,7.8 L2.4,10 V0"/></g></g>
<g transform="translate(1692.50,768.00)"><g transform="matrix(2.2318,0,0.5980,-3.0000,0,0)" fill="none" stroke="#000" stroke-width="1.65" stroke-linecap="round" stroke-linejoin="round" style="vector-effect:non-scaling-stroke"><path transform="translate(0.00,0)" d="M0,0 V10 H2.8 C4,10 4.6,9.1 4.6,7.6 C4.6,6.1 4,5.2 2.8,5.2 H0 M2.4,5.2 L4.6,0"/><path transform="translate(6.10,0)" d="M3.8,0 V10 L0,3.2 H5.2"/></g></g>
<g transform="translate(1642.00,1063.80)"><g transform="matrix(2.3021,0,0.6169,-2.7800,0,0)" fill="none" stroke="#000" stroke-width="1.65" stroke-linecap="round" stroke-linejoin="round" style="vector-effect:non-scaling-stroke"><path transform="translate(0.00,0)" d="M0,7.8 L2.4,10 V0"/><path transform="translate(3.90,0)" d="M0,10 H5 C3,7 1.8,4 1.5,0"/><path transform="translate(10.40,0)" d="M0.9,0.6 L0,-2"/><path transform="translate(13.10,0)" d="M4.8,10 H0.6 L0.2,5.6 C0.9,6 1.7,6.2 2.6,6.2 C4.2,6.2 5,5 5,3.1 C5,1 4,0 2.5,0 C1,0 0,0.7 0,1.8"/><path transform="translate(19.60,0)" d="M0,5.6 H3.2 M1.6,7.6 V3.6 M0,1.6 H3.2"/><path transform="translate(24.30,0)" d="M0,2 V8 C0,9.4 1,10 2.5,10 C4,10 5,9.4 5,8 V2 C5,0.6 4,0 2.5,0 C1,0 0,0.6 0,2 Z"/><path transform="translate(30.80,0)" d="M0.9,0.6 L0,-2"/><path transform="translate(33.50,0)" d="M4.8,10 H0.6 L0.2,5.6 C0.9,6 1.7,6.2 2.6,6.2 C4.2,6.2 5,5 5,3.1 C5,1 4,0 2.5,0 C1,0 0,0.7 0,1.8"/></g></g>
<g transform="translate(1839.00,1023.50)"><g transform="matrix(2.5642,0,0.6871,-3.0500,0,0)" fill="none" stroke="#000" stroke-width="1.65" stroke-linecap="round" stroke-linejoin="round" style="vector-effect:non-scaling-stroke"><path transform="translate(0.00,0)" d="M0,0 V10 H2.8 C4,10 4.6,9.1 4.6,7.6 C4.6,6.1 4,5.2 2.8,5.2 H0 M2.4,5.2 L4.6,0"/><path transform="translate(6.10,0)" d="M0,7.8 C0,9.3 1,10 2.5,10 C4,10 5,9.3 5,7.8 C5,5.8 0,2.5 0,0 H5"/><path transform="translate(12.60,0)" d="M0,2 V8 C0,9.4 1,10 2.5,10 C4,10 5,9.4 5,8 V2 C5,0.6 4,0 2.5,0 C1,0 0,0.6 0,2 Z"/></g></g>
<g transform="translate(1553.00,1265.00)"><g transform="matrix(2.3964,0,0.6421,-2.8000,0,0)" fill="none" stroke="#000" stroke-width="1.65" stroke-linecap="round" stroke-linejoin="round" style="vector-effect:non-scaling-stroke"><path transform="translate(0.00,0)" d="M2.3,8 C1,8 0,7 0,4.6 C0,2.2 1,1 2.3,1 C3.6,1 4.6,2.2 4.6,4.6 C4.6,7 3.6,8 2.3,8 Z M1.6,-1.5 L3,10"/><path transform="translate(6.10,0)" d="M2.5,10 C1.2,10 0.4,9.2 0.4,7.9 C0.4,6.5 1.3,5.7 2.5,5.7 C3.7,5.7 4.6,6.5 4.6,7.9 C4.6,9.2 3.8,10 2.5,10 Z M2.5,5.7 C1,5.7 0,4.7 0,2.9 C0,1 1,0 2.5,0 C4,0 5,1 5,2.9 C5,4.7 4,5.7 2.5,5.7 Z"/><path transform="translate(12.60,0)" d="M0,0 V10 M5,0 V10 M0,5 H5"/><path transform="translate(19.10,0)" d="M0,7.8 L2.4,10 V0"/><path transform="translate(23.00,0)" d="M3.8,0 V10 L0,3.2 H5.2"/></g></g>
<g transform="translate(1639.00,1242.00)"><g transform="matrix(1.5753,0,0.4221,-1.9000,0,0)" fill="none" stroke="#000" stroke-width="1.8" stroke-linecap="round" stroke-linejoin="round" style="vector-effect:non-scaling-stroke"><path transform="translate(0.00,0)" d="M1.6,10.6 C0.6,8 0,5 0,2.5 C0,1.2 0.1,0 0.3,-0.8"/><path transform="translate(3.10,0)" d="M0,5 H3.2 M1.6,7 V3"/><path transform="translate(7.80,0)" d="M0,2 V8 C0,9.4 1,10 2.5,10 C4,10 5,9.4 5,8 V2 C5,0.6 4,0 2.5,0 C1,0 0,0.6 0,2 Z"/><path transform="translate(14.30,0)" d="M0.9,0.6 L0,-2"/><path transform="translate(17.00,0)" d="M0,10 H5 L2,6.2 C4,6.2 5,5 5,3 C5,1 4,0 2.5,0 C1,0 0,0.7 0,1.8"/><path transform="translate(23.50,0)" d="M4.8,8.6 C4.5,9.6 3.6,10 2.5,10 C1,10 0,9 0,7 V3 C0,1 1,0 2.5,0 C4,0 5,1 5,3 C5,5 4,6 2.5,6 C1,6 0,5 0,3.4"/><path transform="translate(30.00,0)" d="M1.3,10.6 C1.5,9.8 1.6,8.5 1.6,7.3 C1.6,4.5 1,1.5 0,-0.8"/></g></g>
<g transform="translate(1599.00,1363.00)"><g transform="matrix(2.4777,0,0.6639,-2.7000,0,0)" fill="none" stroke="#000" stroke-width="1.65" stroke-linecap="round" stroke-linejoin="round" style="vector-effect:non-scaling-stroke"><path transform="translate(0.00,0)" d="M0,0 V10 H2.8 C4,10 4.6,9.1 4.6,7.6 C4.6,6.1 4,5.2 2.8,5.2 H0 M2.4,5.2 L4.6,0"/><path transform="translate(6.10,0)" d="M0,7.8 L2.4,10 V0"/><path transform="translate(10.00,0)" d="M0,7.8 C0,9.3 1,10 2.5,10 C4,10 5,9.3 5,7.8 C5,5.8 0,2.5 0,0 H5"/><path transform="translate(16.50,0)" d="M0.9,0.6 L0,-2"/><path transform="translate(19.20,0)" d="M4.8,10 H0.6 L0.2,5.6 C0.9,6 1.7,6.2 2.6,6.2 C4.2,6.2 5,5 5,3.1 C5,1 4,0 2.5,0 C1,0 0,0.7 0,1.8"/></g></g>
<g transform="translate(1826.00,1392.70)"><g transform="matrix(2.7656,0,0.7411,-2.8700,0,0)" fill="none" stroke="#000" stroke-width="1.65" stroke-linecap="round" stroke-linejoin="round" style="vector-effect:non-scaling-stroke"><path transform="translate(0.00,0)" d="M0,7.8 C0,9.3 1,10 2.5,10 C4,10 5,9.3 5,7.8 C5,5.8 0,2.5 0,0 H5"/><path transform="translate(6.50,0)" d="M4.8,10 H0.6 L0.2,5.6 C0.9,6 1.7,6.2 2.6,6.2 C4.2,6.2 5,5 5,3.1 C5,1 4,0 2.5,0 C1,0 0,0.7 0,1.8"/><path transform="translate(13.00,0)" d="M0,5.6 H3.2 M1.6,7.6 V3.6 M0,1.6 H3.2"/><path transform="translate(17.70,0)" d="M0,7.8 L2.4,10 V0"/></g></g>
<g transform="translate(1812.60,1463.00)"><g transform="matrix(2.6252,0,0.7034,-2.8000,0,0)" fill="none" stroke="#000" stroke-width="1.65" stroke-linecap="round" stroke-linejoin="round" style="vector-effect:non-scaling-stroke"><path transform="translate(0.00,0)" d="M0,10 H5 L2,6.2 C4,6.2 5,5 5,3 C5,1 4,0 2.5,0 C1,0 0,0.7 0,1.8"/><path transform="translate(6.50,0)" d="M0,2 V8 C0,9.4 1,10 2.5,10 C4,10 5,9.4 5,8 V2 C5,0.6 4,0 2.5,0 C1,0 0,0.6 0,2 Z"/><path transform="translate(13.00,0)" d="M0,5.6 H3.2 M1.6,7.6 V3.6 M0,1.6 H3.2"/><path transform="translate(17.70,0)" d="M0,7.8 L2.4,10 V0"/></g></g>
<g transform="translate(1523.60,943.50) rotate(-90)"><g transform="matrix(2.9193,0,0.7822,-2.7600,0,0)" fill="none" stroke="#000" stroke-width="1.65" stroke-linecap="round" stroke-linejoin="round" style="vector-effect:non-scaling-stroke"><path transform="translate(0.00,0)" d="M0,10 H5 C3,7 1.8,4 1.5,0"/><path transform="translate(6.50,0)" d="M0,7.8 C0,9.3 1,10 2.5,10 C4,10 5,9.3 5,7.8 C5,5.8 0,2.5 0,0 H5"/><path transform="translate(13.00,0)" d="M0,5.6 H3.2 M1.6,7.6 V3.6 M0,1.6 H3.2"/><path transform="translate(17.70,0)" d="M0,7.8 L2.4,10 V0"/></g></g>
<g transform="translate(1997.40,1189.50) rotate(-90)"><g transform="matrix(3.0027,0,0.8046,-2.6700,0,0)" fill="none" stroke="#000" stroke-width="1.65" stroke-linecap="round" stroke-linejoin="round" style="vector-effect:non-scaling-stroke"><path transform="translate(0.00,0)" d="M3.8,0 V10 L0,3.2 H5.2"/><path transform="translate(6.70,0)" d="M4.8,10 H0.6 L0.2,5.6 C0.9,6 1.7,6.2 2.6,6.2 C4.2,6.2 5,5 5,3.1 C5,1 4,0 2.5,0 C1,0 0,0.7 0,1.8"/><path transform="translate(13.20,0)" d="M0,5.6 H3.2 M1.6,7.6 V3.6 M0,1.6 H3.2"/><path transform="translate(17.90,0)" d="M0,7.8 L2.4,10 V0"/></g></g>
<g transform="translate(2100.00,1032.60) rotate(-90)"><g transform="matrix(2.9461,0,0.7894,-2.6700,0,0)" fill="none" stroke="#000" stroke-width="1.65" stroke-linecap="round" stroke-linejoin="round" style="vector-effect:non-scaling-stroke"><path transform="translate(0.00,0)" d="M0,7.8 L2.4,10 V0"/><path transform="translate(3.90,0)" d="M0,2 V8 C0,9.4 1,10 2.5,10 C4,10 5,9.4 5,8 V2 C5,0.6 4,0 2.5,0 C1,0 0,0.6 0,2 Z"/><path transform="translate(10.40,0)" d="M0,2 V8 C0,9.4 1,10 2.5,10 C4,10 5,9.4 5,8 V2 C5,0.6 4,0 2.5,0 C1,0 0,0.6 0,2 Z"/><path transform="translate(16.90,0)" d="M0,5.6 H3.2 M1.6,7.6 V3.6 M0,1.6 H3.2"/><path transform="translate(21.60,0)" d="M0,7.8 L2.4,10 V0"/></g></g>
</svg>
<div class="t" style="left:1444.5px;top:46.9px;font-size:30px;font-weight:normal;font-style:normal;color:#2F2F2F;font-family:'Liberation Sans';transform:scaleX(0.9434);">КОМПАС-3D V14 - ПР263-2.01.01.309.cdw -&gt;Вид 1</div><div class="t" style="left:72.2px;top:100.5px;font-size:21.5px;font-weight:normal;font-style:normal;color:#2E333D;font-family:'Liberation Sans';transform:scaleX(0.8643);"><u>Ф</u>айл</div><div class="t" style="left:147.0px;top:100.5px;font-size:21.5px;font-weight:normal;font-style:normal;color:#2E333D;font-family:'Liberation Sans';transform:scaleX(0.9291);"><u>Р</u>едактор</div><div class="t" style="left:261.7px;top:100.5px;font-size:21.5px;font-weight:normal;font-style:normal;color:#2E333D;font-family:'Liberation Sans';transform:scaleX(0.9173);">В<u>ы</u>делить</div><div class="t" style="left:381.2px;top:100.5px;font-size:21.5px;font-weight:normal;font-style:normal;color:#2E333D;font-family:'Liberation Sans';transform:scaleX(0.8328);"><u>В</u>ид</div><div class="t" style="left:442.1px;top:100.5px;font-size:21.5px;font-weight:normal;font-style:normal;color:#2E333D;font-family:'Liberation Sans';transform:scaleX(0.9195);">Вст<u>а</u>вка</div><div class="t" style="left:544.0px;top:100.5px;font-size:21.5px;font-weight:normal;font-style:normal;color:#2E333D;font-family:'Liberation Sans';transform:scaleX(0.9070);"><u>И</u>нструменты</div><div class="t" style="left:694.0px;top:100.5px;font-size:21.5px;font-weight:normal;font-style:normal;color:#2E333D;font-family:'Liberation Sans';transform:scaleX(0.8895);">С<u>п</u>ецификация</div><div class="t" style="left:856.9px;top:100.5px;font-size:21.5px;font-weight:normal;font-style:normal;color:#2E333D;font-family:'Liberation Sans';transform:scaleX(0.8772);">С<u>е</u>рвис</div><div class="t" style="left:949.0px;top:100.5px;font-size:21.5px;font-weight:normal;font-style:normal;color:#2E333D;font-family:'Liberation Sans';transform:scaleX(0.9203);"><u>О</u>кно</div><div class="t" style="left:1023.5px;top:100.5px;font-size:21.5px;font-weight:normal;font-style:normal;color:#2E333D;font-family:'Liberation Sans';transform:scaleX(0.8950);"><u>С</u>правка</div><div class="t" style="left:1127.0px;top:100.5px;font-size:21.5px;font-weight:normal;font-style:normal;color:#2E333D;font-family:'Liberation Sans';transform:scaleX(0.9270);"><u>Б</u>иблиотеки</div><div class="t" style="left:187.0px;top:262.3px;font-size:21.5px;font-weight:bold;font-style:normal;color:#101010;font-family:'Liberation Sans';transform:scaleX(1.0034);">ПР263-2.01.01.309.cdw</div><div class="t" style="left:52.7px;top:2266.8px;font-size:23px;font-weight:normal;font-style:normal;color:#2E333D;font-family:'Liberation Sans';transform:scaleX(0.8680);">Щелкните левой кнопкой мыши на объекте для его выделения (вместе с Ctrl или Shift - добавить к выделенным)</div><div class="t" style="left:114.0px;top:152.8px;font-size:22.5px;font-weight:normal;font-style:normal;color:#000;font-family:'Liberation Sans';transform:scaleX(0.7992);">1.0</div><div class="t" style="left:277.8px;top:152.7px;font-size:22.5px;font-weight:normal;font-style:normal;color:#000;font-family:'Liberation Sans';transform:scaleX(0.8581);">Вид 1 (1)</div><div class="t" style="left:488.0px;top:152.7px;font-size:22.5px;font-weight:normal;font-style:normal;color:#000;font-family:'Liberation Sans';transform:scaleX(0.7191);">0</div><div class="t" style="left:1130.2px;top:150.6px;font-size:21px;font-weight:normal;font-style:normal;color:#000;font-family:'Liberation Sans';transform:scaleX(1.0011);width:73.9px;overflow:hidden;">-30.8058</div><div class="t" style="left:1221.0px;top:150.6px;font-size:21px;font-weight:normal;font-style:normal;color:#000;font-family:'Liberation Sans';transform:scaleX(0.9299);">42.8335</div><div class="t" style="left:1502.7px;top:153.2px;font-size:22.5px;font-weight:normal;font-style:normal;color:#000;font-family:'Liberation Sans';transform:scaleX(0.8717);">0.7529</div>
</body></html>
